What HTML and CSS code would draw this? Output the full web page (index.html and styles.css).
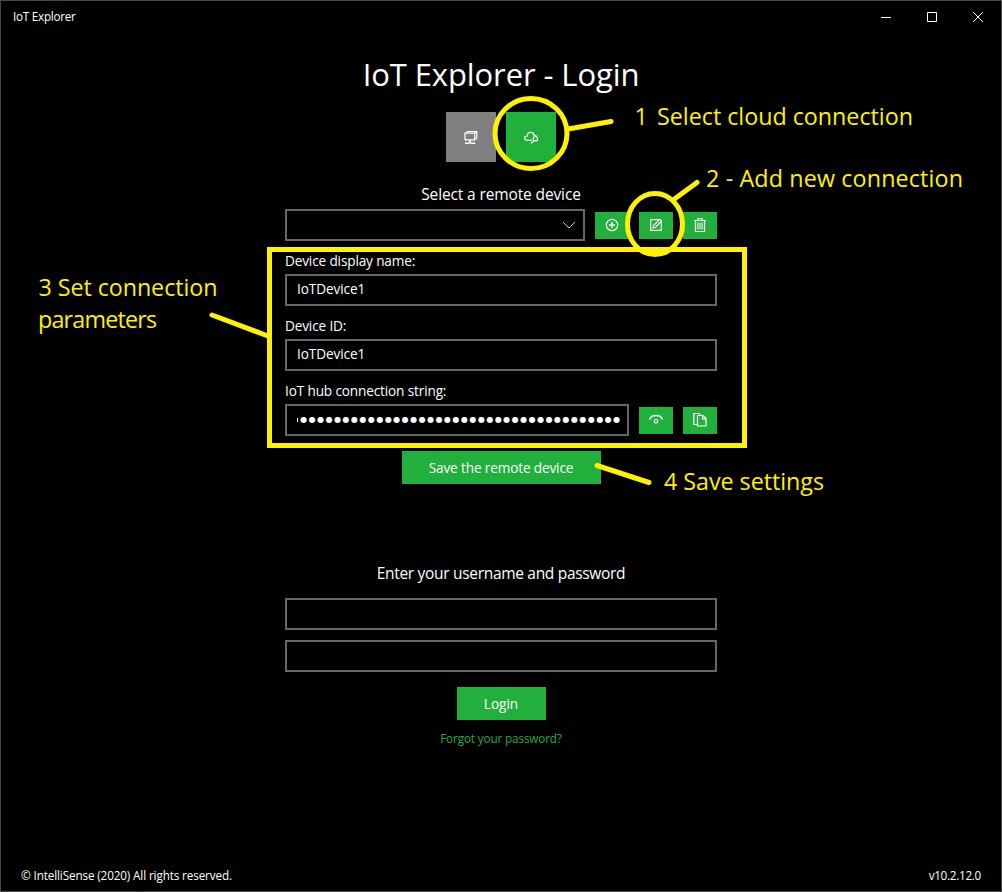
FILE: index.html
```html
<!DOCTYPE html>
<html lang="en">
<head>
<meta charset="utf-8">
<title>IoT Explorer</title>
<link rel="stylesheet" href="styles.css">
</head>
<body>
<div class="window">
  <header class="titlebar">
    <span class="app-name">IoT Explorer</span>
    <div class="controls">
      <svg width="46" height="32" viewBox="0 0 46 32"><path d="M18 16.5h10"/></svg>
      <svg width="46" height="32" viewBox="0 0 46 32"><path d="M18.5 11.5h9v9h-9z"/></svg>
      <svg width="46" height="32" viewBox="0 0 46 32"><path d="M18 11l10 10M28 11l-10 10"/></svg>
    </div>
  </header>

  <main class="panel">
    <h1 class="title">IoT Explorer - Login</h1>
    <div class="tabs">
      <button class="tab tab-local" aria-label="Local">
        <svg width="16" height="16" viewBox="0 0 16 16"><path class="mid" d="M2 4.200h9.700v6.600H2zM3.300 4.200L4.200 2.500h9.600V9l-2 1.500M11.700 4.200l1.800-1.500"/><path class="bold" d="M6.900 11v2.200M2 14.300h3.500l1.400-1.200 1.400 1.200h4"/></svg>
      </button>
      <button class="tab" aria-label="Cloud">
        <svg width="16" height="16" viewBox="0 0 16 16"><path class="mid" d="M9 11.300H4.400C.4 11.100 1 6.800 4.200 7 4.700 2.300 10.500 2.500 11 6.200c1.200-.1 2.200.4 2.600 1.200"/><circle class="mid" cx="12.400" cy="9.700" r="2.200"/><path class="mid" d="M10.900 11.500l-3 3"/></svg>
      </button>
    </div>
    <p class="lead lead-device">Select a remote device</p>
    <div class="row">
      <div class="field select">
        <svg width="14" height="8" viewBox="0 0 14 8"><path d="M1 1l6 6 6-6"/></svg>
      </div>
      <button class="icon-btn" aria-label="Add"><svg width="14" height="14" viewBox="0 0 14 14"><circle class="mid" cx="7" cy="7" r="5.700"/><path class="bold" d="M7 4v6M4 7h6"/></svg></button>
      <button class="icon-btn" aria-label="Edit"><svg width="14" height="14" viewBox="0 0 14 14"><path class="mid" d="M12.300 3v9.300H1.700V1.700H10M4 10l.7-2.700L11 1.300l1.600 1.600L6.500 9.300z"/></svg></button>
      <button class="icon-btn" aria-label="Delete"><svg width="14" height="16" viewBox="0 0 14 16"><path class="mid" d="M1 3.500h12M5 3.500v-2h4v2M2.500 3.500v11h9v-11"/><path d="M4.900 5.500v7M7 5.500v7M9.100 5.500v7"/></svg></button>
    </div>
    <label class="label">Device display name:</label>
    <div class="field">IoTDevice1</div>
    <label class="label">Device ID:</label>
    <div class="field">IoTDevice1</div>
    <label class="label">IoT hub connection string:</label>
    <div class="row">
      <div class="field secret"><svg class="dots" width="326" height="28" viewBox="0 0 326 28"><path d="M0 12h1v4H0z"/><text x="3.300" y="16.200" textLength="320">●●●●●●●●●●●●●●●●●●●●●●●●●●●●●●●●●●●●●●</text></svg></div>
      <button class="icon-btn" aria-label="Show"><svg width="16" height="12" viewBox="0 0 16 12"><path class="bold" d="M1.500 5.500C3.500.3 12.500.3 14.500 5.500"/><circle class="mid" cx="8" cy="7.200" r="1.700"/></svg></button>
      <button class="icon-btn" aria-label="Copy"><svg width="16" height="16" viewBox="0 0 16 16"><path class="mid" d="M5 12.500H1.800v-11H7l1.500 1.500M5.500 3.500H11l3 3v7.500H5.500zM10.500 3.800v3h3.500"/></svg></button>
    </div>
    <button class="btn save">Save the remote device</button>
    <p class="lead lead-login">Enter your username and password</p>
    <div class="field"></div>
    <div class="field second"></div>
    <button class="btn login">Login</button>
    <a class="forgot">Forgot your password?</a>
  </main>

  <footer class="footer">
    <span class="copyright">© IntelliSense (2020) All rights reserved.</span>
    <span class="version">v10.2.12.0</span>
  </footer>

  <svg class="notes" width="1002" height="892" viewBox="0 0 1002 892">
    <g class="marks">
      <ellipse cx="531" cy="133.500" rx="36" ry="35"/>
      <path d="M568 129l43-7.500M673 200l24-17.500M212 315l56 21M597 465.500l52 17"/>
      <ellipse cx="655" cy="224" rx="27.500" ry="30.500"/>
      <path class="frame" d="M269.500 249.500h475v196h-475z"/>
    </g>
    <g class="captions">
      <text x="634.500" y="125">1</text>
      <text x="657" y="125" textLength="256">Select cloud connection</text>
      <text x="706" y="187" textLength="257">2 - Add new connection</text>
      <text x="38.500" y="296" textLength="179">3 Set connection</text>
      <text x="38" y="328" textLength="119">parameters</text>
      <text x="664" y="490" textLength="160">4 Save settings</text>
    </g>
  </svg>
</div>
</body>
</html>
```
FILE: styles.css
```css
* { box-sizing: border-box; }
body {
  margin: 0;
  background: #000;
  color: #fff;
  font-family: "Open Sans", "Noto Sans", sans-serif;
  font-size: 13.6px;
}
svg { display: block; fill: none; stroke: #fff; }
button { border: 0; padding: 0; color: inherit; font: inherit; background: #22b03c; }
.window {
  position: relative;
  width: 1002px;
  height: 892px;
  overflow: hidden;
  border: 1px solid #45474a;
  display: flex;
  flex-direction: column;
}
.titlebar { display: flex; justify-content: space-between; height: 32px; padding-left: 12px; font-size: 11.7px; line-height: 31px; }
.app-name { letter-spacing: -0.25px; }
.controls { display: flex; }
.panel { width: 432px; margin: 0 auto; flex: 1; display: flex; flex-direction: column; }
.title { margin: 21px 0 0; height: 40px; line-height: 40px; font-size: 31px; font-weight: 400; letter-spacing: -0.1px; text-align: center; white-space: nowrap; }
.tabs { display: flex; justify-content: center; gap: 10px; margin-top: 18px; }
.tab { width: 50px; height: 50px; display: grid; place-items: center; }
.tab-local { background: #808080; }
.mid { stroke-width: 1.2; }
.bold { stroke-width: 1.5; }
.lead { margin: 0; height: 24px; line-height: 24px; font-size: 15.5px; text-align: center; white-space: nowrap; }
.lead-device { margin-top: 20px; letter-spacing: -0.13px; }
.row { display: flex; align-items: center; gap: 10px; }
.lead-device + .row { margin-top: 3px; }
.field { height: 32px; border: 2px solid #666; padding: 0 10px; line-height: 25px; flex-shrink: 0; letter-spacing: -0.08px; }
.select { width: 300px; display: flex; align-items: center; justify-content: flex-end; padding-right: 7px; }
.select svg { stroke: #ccc; }
.icon-btn { width: 34px; height: 27px; display: grid; place-items: center; }
.label { height: 33px; padding-top: 10px; line-height: 20px; letter-spacing: -0.14px; white-space: nowrap; flex-shrink: 0; }
.secret { width: 344px; padding: 0 4px 0 10px; }
.dots { fill: #fff; stroke: none; font-family: "DejaVu Sans", sans-serif; font-size: 8px; letter-spacing: 0; }
.btn { height: 33px; align-self: center; flex-shrink: 0; line-height: 33px; white-space: nowrap; }
.save { width: 199px; margin-top: 15px; letter-spacing: -0.14px; }
.lead-login { margin: 77px 0 13px; letter-spacing: -0.31px; }
.second { margin-top: 10px; }
.login { width: 89px; margin-top: 15px; }
.forgot { height: 20px; margin-top: 8px; line-height: 20px; font-size: 11.7px; letter-spacing: -0.12px; text-align: center; color: #22b03c; }
.footer { display: flex; justify-content: space-between; height: 32px; padding: 0 20px; font-size: 11.7px; line-height: 33px; white-space: nowrap; }
.copyright { letter-spacing: -0.12px; }
.version { letter-spacing: -0.28px; }
.notes { position: absolute; left: -1px; top: -1px; pointer-events: none; }
.marks { stroke: #fff200; stroke-width: 5; stroke-linecap: round; }
.captions { fill: #fff200; stroke: none; font-size: 23.3px; white-space: pre; }
```
